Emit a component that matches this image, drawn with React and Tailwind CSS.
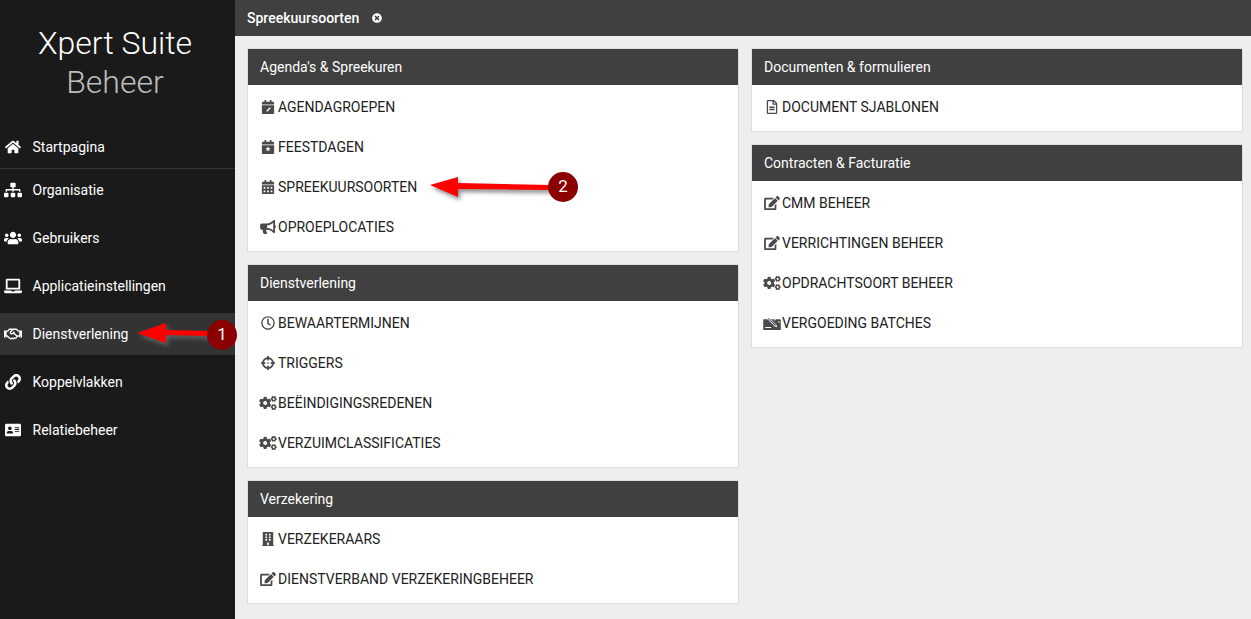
import {
  FaHome, FaSitemap, FaUsers, FaLaptop, FaRegHandshake, FaLink, FaAddressCard, FaTimesCircle,
  FaCalendarAlt, FaBullhorn, FaRegClock, FaCrosshairs, FaCogs, FaBuilding, FaEdit, FaRegFileAlt,
} from 'react-icons/fa';

const CAL = 'M12 192h424c6.6 0 12 5.4 12 12v260c0 26.5-21.5 48-48 48H48c-26.5 0-48-21.5-48-48V204c0-6.6 5.4-12 12-12zm436-44v-36c0-26.5-21.5-48-48-48h-48V12c0-6.6-5.4-12-12-12h-40c-6.6 0-12 5.4-12 12v52H160V12c0-6.6-5.4-12-12-12h-40c-6.6 0-12 5.4-12 12v52H48C21.5 64 0 85.5 0 112v36c0 6.6 5.4 12 12 12h424c6.6 0 12-5.4 12-12z';

function CalendarEdit({ className }) {
  return (
    <svg viewBox="0 0 448 512" className={className} fill="currentColor">
      <path d={CAL} />
      <path fill="#fff" d="M290 262l36 36-118 118-44 8 8-44z" />
    </svg>
  );
}

function CalendarStar({ className }) {
  return (
    <svg viewBox="0 0 448 512" className={className} fill="currentColor">
      <path d={CAL} />
      <path fill="#fff" d="M224 240l27 56 62 8-45 43 11 61-55-30-55 30 11-61-45-43 62-8z" />
    </svg>
  );
}

function MoneyEdit({ className }) {
  return (
    <svg viewBox="0 0 640 512" className={className} fill="currentColor">
      <path d="M20 120h600c11 0 20 9 20 20v352c0 11-9 20-20 20H20c-11 0-20-9-20-20V140c0-11 9-20 20-20z" />
      <path fill="#fff" d="M190 30L130 90l290 290 90 30-30-90zM70 400h220v36H70zM540 200h60v36h-60zM400 120h60v36h-60z" />
      <path d="M190 70l-22 22 252 252 44 14-14-44z" />
    </svg>
  );
}

const nav = [
  { icon: FaSitemap, label: 'Organisatie' },
  { icon: FaUsers, label: 'Gebruikers' },
  { icon: FaLaptop, label: 'Applicatieinstellingen' },
  { icon: FaRegHandshake, label: 'Dienstverlening', active: true },
  { icon: FaLink, label: 'Koppelvlakken', small: true },
  { icon: FaAddressCard, label: 'Relatiebeheer', small: true },
];

const leftPanels = [
  {
    title: "Agenda's & Spreekuren",
    items: [
      { icon: CalendarEdit, label: 'AGENDAGROEPEN' },
      { icon: CalendarStar, label: 'FEESTDAGEN' },
      { icon: FaCalendarAlt, label: 'SPREEKUURSOORTEN' },
      { icon: FaBullhorn, label: 'OPROEPLOCATIES' },
    ],
  },
  {
    title: 'Dienstverlening',
    items: [
      { icon: FaRegClock, label: 'BEWAARTERMIJNEN' },
      { icon: FaCrosshairs, label: 'TRIGGERS' },
      { icon: FaCogs, label: 'BEËINDIGINGSREDENEN' },
      { icon: FaCogs, label: 'VERZUIMCLASSIFICATIES' },
    ],
  },
  {
    title: 'Verzekering',
    items: [
      { icon: FaBuilding, label: 'VERZEKERAARS' },
      { icon: FaEdit, label: 'DIENSTVERBAND VERZEKERINGBEHEER' },
    ],
  },
];

const rightPanels = [
  {
    title: 'Documenten & formulieren',
    items: [{ icon: FaRegFileAlt, label: 'DOCUMENT SJABLONEN' }],
  },
  {
    title: 'Contracten & Facturatie',
    items: [
      { icon: FaEdit, label: 'CMM BEHEER' },
      { icon: FaEdit, label: 'VERRICHTINGEN BEHEER' },
      { icon: FaCogs, label: 'OPDRACHTSOORT BEHEER' },
      { icon: MoneyEdit, label: 'VERGOEDING BATCHES' },
    ],
  },
];

function Panel({ title, items }) {
  return (
    <div className="bg-white border border-[#dcdce0]">
      <div className="h-9 bg-[#404040] text-white text-sm flex items-center px-3">{title}</div>
      <div className="pt-0.5 pb-1">
        {items.map(item => (
          <div key={item.label} className="h-10 flex items-center pl-3 text-sm text-[#212121]">
            <item.icon className="w-[18px] h-[14px] -ml-px mr-px shrink-0 text-[#4a4a4a]" />
            {item.label}
          </div>
        ))}
      </div>
    </div>
  );
}

function Arrow({ className, number, width, d }) {
  return (
    <div className={`absolute flex items-center ${className}`}>
      <svg
        width={width}
        height="30"
        viewBox={`0 0 ${width} 30`}
        className="overflow-visible drop-shadow-[2px_3px_2px_rgba(110,110,110,0.8)]"
      >
        <path d={d} fill="#f00" />
      </svg>
      <div className="relative w-[30px] h-[30px] -ml-[2px] rounded-full bg-[#8b0000] text-white text-[17px] flex items-center justify-center shrink-0">
        {number}
      </div>
    </div>
  );
}

export default function App() {
  return (
    <div className="relative flex h-[619px] overflow-hidden bg-[#eeeeee] font-['Roboto',sans-serif]">
      <aside className="w-[235px] shrink-0 bg-[#1a1a1a] text-white">
        <div className="w-[230px] h-[126px] pt-6 text-center text-[32px] font-light leading-[39px]">
          <div>Xpert Suite</div>
          <div className="text-[#bdbdbd]">Beheer</div>
        </div>
        <div className="h-[42px] flex items-center pl-1 text-sm">
          <span className="w-[18px] mr-[10.5px] flex justify-center">
            <FaHome className="w-4 h-4" />
          </span>
          Startpagina
        </div>
        <div className="h-px bg-[#333333]" />
        <div className="flex flex-col gap-1.5">
          {nav.map(item => (
            <div
              key={item.label}
              className={`h-[42px] flex items-center pl-1 text-sm ${item.active ? 'bg-[#333333]' : ''}`}
            >
              <span className="w-[18px] mr-[10.5px] flex justify-center">
                <item.icon className={item.small ? 'w-4 h-4' : 'w-[18px] h-[18px]'} />
              </span>
              {item.label}
            </div>
          ))}
        </div>
      </aside>

      <main className="flex-1 min-w-0">
        <div className="h-9 bg-[#404040] text-white text-sm font-medium flex items-center pl-3">
          Spreekuursoorten
          <FaTimesCircle className="w-[10px] h-[10px] ml-[13px]" />
        </div>
        <div className="grid grid-cols-2 gap-3 pl-3 pr-2 pt-3">
          <div className="flex flex-col gap-3">
            {leftPanels.map(p => <Panel key={p.title} {...p} />)}
          </div>
          <div className="flex flex-col gap-3">
            {rightPanels.map(p => <Panel key={p.title} {...p} />)}
          </div>
        </div>
      </main>

      <Arrow
        className="left-[137px] top-[320px]"
        number="1"
        width={72}
        d="M0 13L29 3v7L72 11v5L29 15v8z"
      />
      <Arrow
        className="left-[430px] top-[172px]"
        number="2"
        width={120}
        d="M0 13L28 5v6L120 13v5L28 17v8z"
      />
    </div>
  );
}
